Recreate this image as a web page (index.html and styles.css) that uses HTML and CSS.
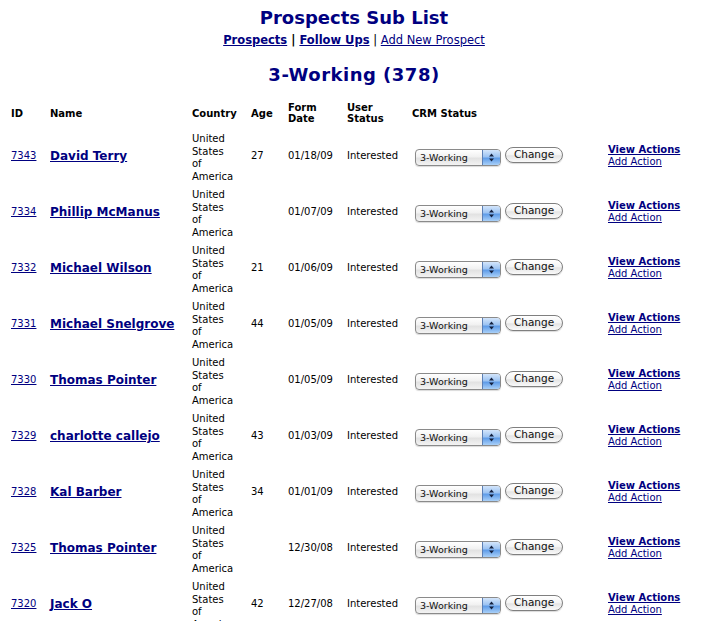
FILE: index.html
```html
<!DOCTYPE html>
<html lang="en">
<head>
<meta charset="utf-8">
<title>Prospects Sub List</title>
<link rel="stylesheet" href="styles.css">
</head>
<body>
<h1 class="title">Prospects Sub List</h1>
<div class="nav"><b><a href="#">Prospects</a> | <a href="#">Follow Ups</a></b> | <a href="#">Add New Prospect</a></div>
<h2 class="subtitle">3-Working (378)</h2>
<table class="list">
<colgroup>
<col class="c-id"><col class="c-name"><col class="c-country"><col class="c-age"><col class="c-date"><col class="c-user"><col class="c-crm"><col class="c-act">
</colgroup>
<thead>
<tr><th>ID</th><th>Name</th><th class="country">Country</th><th>Age</th><th>Form Date</th><th>User Status</th><th class="nowrap">CRM Status</th><th></th></tr>
</thead>
<tbody id="rows">
<tr><td><a class="id" href="#">7343</a></td><td><a class="name" href="#">David Terry</a></td><td class="country">United States of America</td><td>27</td><td>01/18/09</td><td>Interested</td><td class="crm"><span class="select"><span class="sel-text">3-Working</span><span class="sel-arrow"><svg width="11" height="13" viewBox="0 0 11 13"><path d="M3 5.5 L5.5 2.5 L8 5.5 Z M3 7.5 L5.5 10.5 L8 7.5 Z" fill="#14213f"/></svg></span></span><button class="btn">Change</button></td><td class="acts"><a class="view" href="#">View Actions</a><br><a class="add" href="#">Add Action</a></td></tr>
<tr><td><a class="id" href="#">7334</a></td><td><a class="name" href="#">Phillip McManus</a></td><td class="country">United States of America</td><td></td><td>01/07/09</td><td>Interested</td><td class="crm"><span class="select"><span class="sel-text">3-Working</span><span class="sel-arrow"><svg width="11" height="13" viewBox="0 0 11 13"><path d="M3 5.5 L5.5 2.5 L8 5.5 Z M3 7.5 L5.5 10.5 L8 7.5 Z" fill="#14213f"/></svg></span></span><button class="btn">Change</button></td><td class="acts"><a class="view" href="#">View Actions</a><br><a class="add" href="#">Add Action</a></td></tr>
<tr><td><a class="id" href="#">7332</a></td><td><a class="name" href="#">Michael Wilson</a></td><td class="country">United States of America</td><td>21</td><td>01/06/09</td><td>Interested</td><td class="crm"><span class="select"><span class="sel-text">3-Working</span><span class="sel-arrow"><svg width="11" height="13" viewBox="0 0 11 13"><path d="M3 5.5 L5.5 2.5 L8 5.5 Z M3 7.5 L5.5 10.5 L8 7.5 Z" fill="#14213f"/></svg></span></span><button class="btn">Change</button></td><td class="acts"><a class="view" href="#">View Actions</a><br><a class="add" href="#">Add Action</a></td></tr>
<tr><td><a class="id" href="#">7331</a></td><td><a class="name" href="#">Michael Snelgrove</a></td><td class="country">United States of America</td><td>44</td><td>01/05/09</td><td>Interested</td><td class="crm"><span class="select"><span class="sel-text">3-Working</span><span class="sel-arrow"><svg width="11" height="13" viewBox="0 0 11 13"><path d="M3 5.5 L5.5 2.5 L8 5.5 Z M3 7.5 L5.5 10.5 L8 7.5 Z" fill="#14213f"/></svg></span></span><button class="btn">Change</button></td><td class="acts"><a class="view" href="#">View Actions</a><br><a class="add" href="#">Add Action</a></td></tr>
<tr><td><a class="id" href="#">7330</a></td><td><a class="name" href="#">Thomas Pointer</a></td><td class="country">United States of America</td><td></td><td>01/05/09</td><td>Interested</td><td class="crm"><span class="select"><span class="sel-text">3-Working</span><span class="sel-arrow"><svg width="11" height="13" viewBox="0 0 11 13"><path d="M3 5.5 L5.5 2.5 L8 5.5 Z M3 7.5 L5.5 10.5 L8 7.5 Z" fill="#14213f"/></svg></span></span><button class="btn">Change</button></td><td class="acts"><a class="view" href="#">View Actions</a><br><a class="add" href="#">Add Action</a></td></tr>
<tr><td><a class="id" href="#">7329</a></td><td><a class="name" href="#">charlotte callejo</a></td><td class="country">United States of America</td><td>43</td><td>01/03/09</td><td>Interested</td><td class="crm"><span class="select"><span class="sel-text">3-Working</span><span class="sel-arrow"><svg width="11" height="13" viewBox="0 0 11 13"><path d="M3 5.5 L5.5 2.5 L8 5.5 Z M3 7.5 L5.5 10.5 L8 7.5 Z" fill="#14213f"/></svg></span></span><button class="btn">Change</button></td><td class="acts"><a class="view" href="#">View Actions</a><br><a class="add" href="#">Add Action</a></td></tr>
<tr><td><a class="id" href="#">7328</a></td><td><a class="name" href="#">Kal Barber</a></td><td class="country">United States of America</td><td>34</td><td>01/01/09</td><td>Interested</td><td class="crm"><span class="select"><span class="sel-text">3-Working</span><span class="sel-arrow"><svg width="11" height="13" viewBox="0 0 11 13"><path d="M3 5.5 L5.5 2.5 L8 5.5 Z M3 7.5 L5.5 10.5 L8 7.5 Z" fill="#14213f"/></svg></span></span><button class="btn">Change</button></td><td class="acts"><a class="view" href="#">View Actions</a><br><a class="add" href="#">Add Action</a></td></tr>
<tr><td><a class="id" href="#">7325</a></td><td><a class="name" href="#">Thomas Pointer</a></td><td class="country">United States of America</td><td></td><td>12/30/08</td><td>Interested</td><td class="crm"><span class="select"><span class="sel-text">3-Working</span><span class="sel-arrow"><svg width="11" height="13" viewBox="0 0 11 13"><path d="M3 5.5 L5.5 2.5 L8 5.5 Z M3 7.5 L5.5 10.5 L8 7.5 Z" fill="#14213f"/></svg></span></span><button class="btn">Change</button></td><td class="acts"><a class="view" href="#">View Actions</a><br><a class="add" href="#">Add Action</a></td></tr>
<tr><td><a class="id" href="#">7320</a></td><td><a class="name" href="#">Jack O</a></td><td class="country">United States of America</td><td>42</td><td>12/27/08</td><td>Interested</td><td class="crm"><span class="select"><span class="sel-text">3-Working</span><span class="sel-arrow"><svg width="11" height="13" viewBox="0 0 11 13"><path d="M3 5.5 L5.5 2.5 L8 5.5 Z M3 7.5 L5.5 10.5 L8 7.5 Z" fill="#14213f"/></svg></span></span><button class="btn">Change</button></td><td class="acts"><a class="view" href="#">View Actions</a><br><a class="add" href="#">Add Action</a></td></tr>
</tbody>
</table>
</body>
</html>
```
FILE: styles.css
```css
html {
  overflow: hidden;
}
body {
  margin: 9px 8px 8px;
  background: #ffffff;
  color: #000000;
  font-family: "DejaVu Sans", Verdana, sans-serif;
  font-size: 10px;
}
a {
  color: #000080;
}
.title {
  margin: 0;
  font-size: 18px;
  line-height: 18px;
  font-weight: bold;
  color: #000080;
  text-align: center;
}
.nav {
  margin-top: 6px;
  font-size: 11.5px;
  line-height: 14px;
  text-align: center;
}
.subtitle {
  margin: 19px 0 0;
  font-size: 18px;
  line-height: 18px;
  font-weight: bold;
  letter-spacing: 0.5px;
  color: #000080;
  text-align: center;
}
.list {
  margin-top: 14px;
  width: 692px;
  table-layout: fixed;
  border-collapse: separate;
  border-spacing: 0;
}
.c-id { width: 39px; }
.c-name { width: 142px; }
.c-country { width: 59px; }
.c-age { width: 37px; }
.c-date { width: 59px; }
.c-user { width: 65px; }
.c-crm { width: 196px; }
.c-act { width: 95px; }
.list th {
  padding: 4px 3px;
  font-size: 10px;
  line-height: 11px;
  font-weight: bold;
  text-align: left;
  vertical-align: middle;
}
.list td {
  padding: 3px 3px;
  font-size: 10px;
  line-height: 12.5px;
  text-align: left;
  vertical-align: middle;
}
.list td.country {
  padding: 5px 13px 1px 3px;
}
.list th.country,
.list th.nowrap {
  white-space: nowrap;
}
.id {
  font-size: 10px;
}
.name {
  font-size: 12px;
  font-weight: bold;
  line-height: 14px;
}
.crm {
  white-space: nowrap;
}
.select {
  display: inline-flex;
  vertical-align: middle;
  box-sizing: border-box;
  width: 86px;
  height: 17px;
  margin-left: 3px;
  margin-top: 3px;
  border: 1px solid #8a8a8a;
  border-radius: 4px;
  overflow: hidden;
  background: linear-gradient(#ffffff, #f1f1f1 45%, #e2e2e2 55%, #f3f3f3);
  box-shadow: 0 1px 1px rgba(0, 0, 0, 0.15);
}
.sel-text {
  flex: 1;
  padding-left: 4px;
  font-size: 9.5px;
  line-height: 15px;
  color: #111111;
}
.sel-arrow {
  display: flex;
  align-items: center;
  justify-content: center;
  width: 17px;
  border-left: 1px solid #5b7fb5;
  background: linear-gradient(#d3e5fb, #9cc3f2 45%, #5f9ce8 55%, #a9d0f8);
}
.btn {
  vertical-align: middle;
  box-sizing: border-box;
  width: 58px;
  height: 16px;
  margin: 0 0 3px 4px;
  padding: 0;
  border: 1px solid #7f7f7f;
  border-radius: 8px;
  background: linear-gradient(#ffffff, #f4f4f4 50%, #e4e4e4 55%, #fafafa);
  font-family: "DejaVu Sans", Verdana, sans-serif;
  font-size: 10.5px;
  line-height: 13px;
  color: #111111;
  box-shadow: 0 1px 1px rgba(0, 0, 0, 0.15);
}
.list td.acts {
  line-height: 12px;
}
.view {
  font-weight: bold;
}
```
